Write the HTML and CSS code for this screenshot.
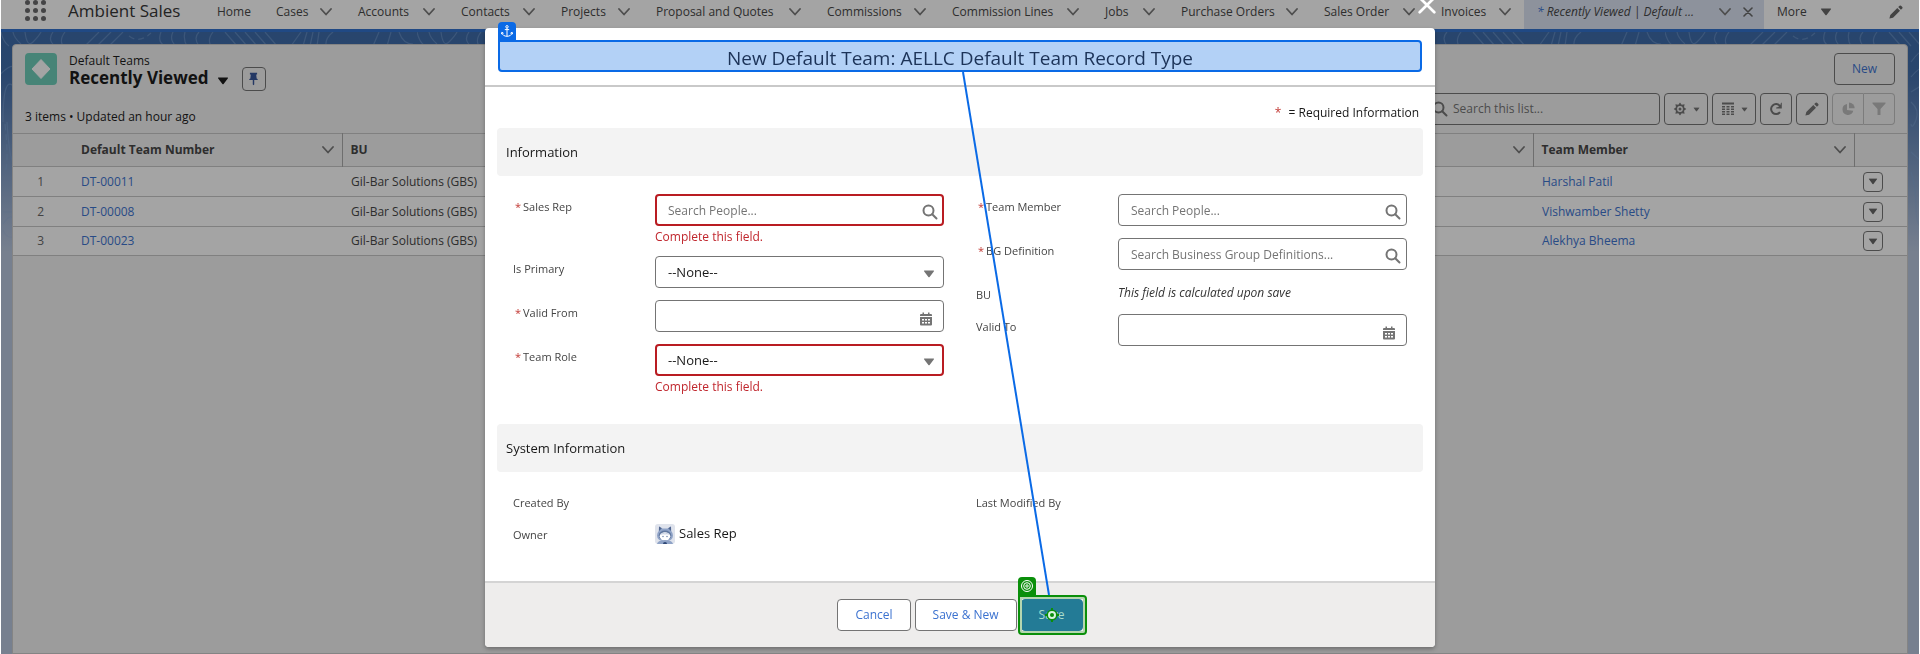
FILE: index.html
```html
<!DOCTYPE html>
<html lang="en">
<head>
<meta charset="utf-8">
<title>Ambient Sales</title>
<link rel="stylesheet" href="styles.css">
</head>
<body>
<svg class="symbols" aria-hidden="true">
  <symbol id="chevron" viewBox="0 0 12 8"><path d="M1 1l5 5.500 5-5.500" fill="none" stroke="currentColor" stroke-width="1.800" stroke-linecap="round" stroke-linejoin="round"/></symbol>
  <symbol id="down" viewBox="0 0 12 8"><path d="M1.500.5h9q1 0 .3.900L6.600 6.900q-.6.700-1.200 0L1.200 1.400Q.5.500 1.500.5z" fill="currentColor"/></symbol>
  <symbol id="search" viewBox="0 0 16 16"><circle cx="6.500" cy="6.500" r="5" fill="none" stroke="currentColor" stroke-width="2"/><path d="M10.200 10.200l4.300 4.300" stroke="currentColor" stroke-width="2" stroke-linecap="round"/></symbol>
  <symbol id="calendar" viewBox="0 0 12 14"><path d="M2.500.5h1.500V2h4V.5h1.500V2H11q1 0 1 1v1H0V3q0-1 1-1h1.500zM0 5h12v7.500q0 1-1 1H1q-1 0-1-1z" fill="currentColor"/><path d="M2 7h2v1.500H2zM5 7h2v1.500H5zM8 7h2v1.500H8zM2 10h2v1.500H2zM5 10h2v1.500H5zM8 10h2v1.500H8z" fill="#fff"/></symbol>
  <symbol id="pencil" viewBox="0 0 14 14"><path d="M.4 13.600L1.300 10 8.300 3l2.700 2.700-7 7zM9.200 2.100l1.400-1.400q.7-.6 1.400 0l1.300 1.300q.6.700 0 1.400l-1.400 1.400z" fill="currentColor"/></symbol>
</svg>

<header class="nav">
  <svg class="launcher" viewBox="0 0 21 22" aria-hidden="true"><g fill="#68686a"><circle cx="2.500" cy="2.500" r="2.500"/><circle cx="10.500" cy="2.500" r="2.500"/><circle cx="18.500" cy="2.500" r="2.500"/><circle cx="2.500" cy="10.500" r="2.500"/><circle cx="10.500" cy="10.500" r="2.500"/><circle cx="18.500" cy="10.500" r="2.500"/><circle cx="2.500" cy="18.500" r="2.500"/><circle cx="10.500" cy="18.500" r="2.500"/><circle cx="18.500" cy="18.500" r="2.500"/></g></svg>
  <span class="app-name">Ambient Sales</span>
  <nav class="tabs">
    <a class="tab" href="#">Home</a>
    <a class="tab" href="#">Cases<svg class="chev"><use href="#chevron"/></svg></a>
    <a class="tab" href="#">Accounts<svg class="chev"><use href="#chevron"/></svg></a>
    <a class="tab" href="#">Contacts<svg class="chev"><use href="#chevron"/></svg></a>
    <a class="tab" href="#">Projects<svg class="chev"><use href="#chevron"/></svg></a>
    <a class="tab" href="#">Proposal and Quotes<svg class="chev"><use href="#chevron"/></svg></a>
    <a class="tab" href="#">Commissions<svg class="chev"><use href="#chevron"/></svg></a>
    <a class="tab" href="#">Commission Lines<svg class="chev"><use href="#chevron"/></svg></a>
    <a class="tab" href="#">Jobs<svg class="chev"><use href="#chevron"/></svg></a>
    <a class="tab" href="#">Purchase Orders<svg class="chev"><use href="#chevron"/></svg></a>
    <a class="tab" href="#">Sales Order<svg class="chev"><use href="#chevron"/></svg></a>
    <a class="tab tab-invoices" href="#">Invoices<svg class="chev"><use href="#chevron"/></svg></a>
    <a class="tab tab-active" href="#"><span><b class="unsaved">*</b> Recently Viewed | Default ...</span><svg class="chev"><use href="#chevron"/></svg><svg class="tab-close" viewBox="0 0 10 10"><path d="M1 1l8 8M9 1L1 9" stroke="currentColor" stroke-width="1.600" stroke-linecap="round"/></svg></a>
    <a class="tab tab-more" href="#">More<svg class="tri"><use href="#down"/></svg></a>
  </nav>
  <svg class="edit-nav"><use href="#pencil"/></svg>
</header>

<main class="page">
  <svg class="contours" aria-hidden="true">
    <defs>
      <pattern id="topo" width="416" height="230" patternUnits="userSpaceOnUse">
        <g fill="none" stroke="#7fa6d8" stroke-width="1.200" opacity=".45">
          <path d="M0 0q2 10 8 14M12 0q1 6 8 12M24 0q2 16 8 10t8-10M52 0q-6 8 2 14M64 0q-6 8-2 14M98 0L84 14M110 0L96 14M122 0l-14 14"/>
          <path d="M128 4q10 8 22-3" stroke-dasharray="6 4"/>
          <path d="M160 0q-4 10 4 14M172 0q-4 8 3 14M184 0q-2 8 2 14M198 0q-6 6 0 14M212 0q-6 8-2 14M224 0l12 14M234 0l12 14M244 0l12 14M254 0l12 14M264 0l12 14M300 0l-10 14M306 0l-4 14M312 0l-3 14M318 0l-2 14M332 0q-8 6-7 14M378 0l-6 14M390 0l-4 14M398 0q4 12 14 12"/>
          <path d="M-4 46Q10 30 14 36M2 90q0-50 12-34M6 90q2 34 7 44M2 180h14M2 192q8-12 12-4v16q-8 4-12-6"/>
          <path d="M4 92q4 36 0 50" stroke-dasharray="6 4"/>
          <path d="M246 30q10-14 16-12M246 45q8-10 16-11M246 60l16-10M246 70q9 8 5 18t-5 4M246 120q12 12 16 10M246 140q5 14 5 36t10 20"/>
        </g>
      </pattern>
      <linearGradient id="fade" x2="0" y2="1"><stop offset=".6" stop-color="#fff"/><stop offset="1" stop-color="#000"/></linearGradient>
      <mask id="fadeMask"><rect width="100%" height="230" fill="url(#fade)"/></mask>
    </defs>
    <rect width="100%" height="230" fill="url(#topo)" mask="url(#fadeMask)"/>
  </svg>
  <section class="card">
    <div class="card-top">
      <svg class="object-icon" viewBox="0 0 32 32" aria-hidden="true"><rect width="32" height="32" rx="4" fill="#6dcdb8"/><path d="M16 6.500l9 9.500-9 9.500L7 16z" fill="#fff" stroke="#fff" stroke-linejoin="round"/></svg>
      <div class="heading">
        <span class="object-name">Default Teams</span>
        <h1 class="view-name">Recently Viewed</h1>
      </div>
      <svg class="view-tri"><use href="#down"/></svg>
      <button class="btn pin" aria-label="Pin this list view"><svg viewBox="0 0 10 14"><path d="M1 0h8v2H8l.5 4.500q1.300.5 1.300 1.700H5.800V13L5 14l-.8-1V8.200H.2q0-1.200 1.300-1.700L2 2H1z" fill="currentColor"/></svg></button>
      <button class="btn new">New</button>
    </div>
    <div class="tools">
      <p class="count">3 items • Updated an hour ago</p>
      <label class="list-search"><svg><use href="#search"/></svg><input type="search" placeholder="Search this list..." aria-label="Search this list"></label>
      <button class="btn tool wide" aria-label="List view controls"><svg class="gear" viewBox="0 0 14 14"><path d="M7 .5l1.700 2.300 2.900-.5-.6 2.900L13.300 7 11 8.800l.6 2.900-2.900-.5L7 13.500l-1.700-2.300-2.900.5.6-2.900L.7 7 3 5.200l-.6-2.900 2.900.5z" fill="currentColor"/><circle cx="7" cy="7" r="2.900" fill="#f3f3f3"/><circle cx="7" cy="7" r="1.500" fill="currentColor"/></svg><svg class="small-tri" viewBox="0 0 12 8"><use href="#down"/></svg></button>
      <button class="btn tool wide" aria-label="Display as"><svg class="grid-icon" viewBox="0 0 12 14"><path d="M0 .5h12v2H0zM0 4h3v1.500H0zM4.500 4h3v1.500h-3zM9 4h3v1.500H9zM0 6.500h3V8H0zM4.500 6.500h3V8h-3zM9 6.500h3V8H9zM0 9h3v1.500H0zM4.500 9h3v1.500h-3zM9 9h3v1.500H9zM0 11.500h3V13H0zM4.500 11.500h3V13h-3zM9 11.500h3V13H9z" fill="currentColor"/></svg><svg class="small-tri" viewBox="0 0 12 8"><use href="#down"/></svg></button>
      <button class="btn tool" aria-label="Refresh"><svg class="refresh" viewBox="0 0 14 14"><path d="M11 10.200A5 5 0 1 1 11 4" fill="none" stroke="currentColor" stroke-width="2"/><path d="M12.800.8v5.600H7.200v-.8l2-.6 2.200-2.200.6-2z" fill="currentColor"/></svg></button>
      <button class="btn tool" aria-label="Edit"><svg class="edit"><use href="#pencil"/></svg></button>
      <div class="pair">
        <button class="btn tool" disabled aria-label="Charts"><svg class="pie" viewBox="0 0 14 14"><path d="M6 2a5.500 5.500 0 1 0 6.300 6.800L6 8z" fill="currentColor"/><path d="M8 .5V6.300h5.700A6 6 0 0 0 8 .5z" fill="currentColor"/></svg></button>
        <button class="btn tool" disabled aria-label="Filters"><svg class="funnel" viewBox="0 0 14 14"><path d="M.5.500h13v1L8.500 7v6h-3V7L.5 1.500z" fill="currentColor"/></svg></button>
      </div>
    </div>
    <table class="list">
      <thead><tr>
        <th class="col-num"></th>
        <th class="col-name"><span class="th">Default Team Number<svg class="chev"><use href="#chevron"/></svg></span></th>
        <th class="col-bu"><span class="th">BU<svg class="chev"><use href="#chevron"/></svg></span></th>
        <th class="col-member"><span class="th">Team Member<svg class="chev"><use href="#chevron"/></svg></span></th>
        <th class="col-act"></th>
      </tr></thead>
      <tbody>
        <tr><td class="num">1</td><td><a href="#">DT-00011</a></td><td>Gil-Bar Solutions (GBS)</td><td><a href="#">Harshal Patil</a></td><td class="act"><button class="btn row-menu" aria-label="Row actions"><svg viewBox="0 0 12 8"><use href="#down"/></svg></button></td></tr>
        <tr><td class="num">2</td><td><a href="#">DT-00008</a></td><td>Gil-Bar Solutions (GBS)</td><td><a href="#">Vishwamber Shetty</a></td><td class="act"><button class="btn row-menu" aria-label="Row actions"><svg viewBox="0 0 12 8"><use href="#down"/></svg></button></td></tr>
        <tr><td class="num">3</td><td><a href="#">DT-00023</a></td><td>Gil-Bar Solutions (GBS)</td><td><a href="#">Alekhya Bheema</a></td><td class="act"><button class="btn row-menu" aria-label="Row actions"><svg viewBox="0 0 12 8"><use href="#down"/></svg></button></td></tr>
      </tbody>
    </table>
  </section>
</main>

<div class="backdrop"></div>

<form class="modal" role="dialog" aria-labelledby="modal-title">
  <button class="close" type="button" aria-label="Close"><svg viewBox="0 0 16 16"><path d="M1.500 1.500l13 13M14.500 1.500l-13 13" stroke="#fff" stroke-width="2.400" stroke-linecap="round"/></svg></button>
  <div class="modal-head">
    <div class="title-box">
      <span class="anchor-tag"><svg viewBox="0 0 12 12" fill="none" stroke="#fff"><circle cx="6" cy="1.800" r="1.200"/><path d="M6 3v8.300M3.800 4.600h4.400M.8 7.600C1.200 10 3.400 11.300 6 11.300S10.800 10 11.200 7.600M.4 9.200l.5-1.900 1.700 1M11.600 9.200l-.5-1.900-1.700 1"/></svg></span>
      <h2 id="modal-title">New Default Team: AELLC Default Team Record Type</h2>
    </div>
  </div>
  <div class="modal-body">
    <p class="required-note"><span class="req">*</span> = Required Information</p>
    <h3 class="section-title">Information</h3>
    <div class="section">
      <div class="column">
        <div class="field"><label for="rep"><span class="req">*</span>Sales Rep</label><div class="control invalid"><input id="rep" type="text" placeholder="Search People..."><svg class="i-search"><use href="#search"/></svg><p class="error">Complete this field.</p></div></div>
        <div class="field"><label for="primary">Is Primary</label><div class="control"><select id="primary"><option>--None--</option></select><svg class="i-down"><use href="#down"/></svg></div></div>
        <div class="field"><label for="from"><span class="req">*</span>Valid From</label><div class="control"><input id="from" type="text"><svg class="i-cal"><use href="#calendar"/></svg></div></div>
        <div class="field"><label for="role"><span class="req">*</span>Team Role</label><div class="control invalid"><select id="role"><option>--None--</option></select><svg class="i-down"><use href="#down"/></svg><p class="error">Complete this field.</p></div></div>
      </div>
      <div class="column">
        <div class="field"><label for="member"><span class="req">*</span>Team Member</label><div class="control"><input id="member" type="text" placeholder="Search People..."><svg class="i-search"><use href="#search"/></svg></div></div>
        <div class="field"><label for="bg"><span class="req">*</span>BG Definition</label><div class="control"><input id="bg" type="text" placeholder="Search Business Group Definitions..."><svg class="i-search"><use href="#search"/></svg></div></div>
        <div class="field"><span class="label">BU</span><em class="calculated">This field is calculated upon save</em></div>
        <div class="field"><label for="to">Valid To</label><div class="control"><input id="to" type="text"><svg class="i-cal"><use href="#calendar"/></svg></div></div>
      </div>
    </div>
    <h3 class="section-title">System Information</h3>
    <div class="section section-last">
      <div class="column">
        <div class="field"><span class="label">Created By</span></div>
        <div class="field"><span class="label">Owner</span><div class="owner"><svg viewBox="0 0 20 20" aria-hidden="true"><rect width="20" height="20" rx="3" fill="#dfe3ec"/><path d="M4 2.500l3.500 2h5l3.500-2 .3 4.500Q18 9 18 11.500 18 17 10 17T2 11.500Q2 9 3.700 7z" fill="#8fa3c7"/><path d="M4 2.500l2.800 1.800L4 7zM16 2.500l-2.800 1.800L16 7z" fill="#4f658f"/><ellipse cx="10" cy="11.500" rx="6.300" ry="5" fill="#60779f"/><ellipse cx="10" cy="12.300" rx="5.300" ry="4" fill="#fff"/><path d="M5 11q2-3 5-1.500Q13 8 15 11q-2.500-1-5-.5-2.500-.5-5 .5z" fill="#c4cee0"/><circle cx="8" cy="12.500" r=".7" fill="#60779f"/><circle cx="12" cy="12.500" r=".7" fill="#60779f"/><path d="M2 20q1-3.500 5-3.500h6q4 0 5 3.500z" fill="#8fa3c7"/><path d="M8 20q0-2 2-2t2 2z" fill="#2f4775"/></svg>Sales Rep</div></div>
      </div>
      <div class="column">
        <div class="field"><span class="label">Last Modified By</span></div>
      </div>
    </div>
  </div>
  <div class="modal-foot">
    <button class="btn" type="button">Cancel</button>
    <button class="btn" type="button">Save &amp; New</button>
    <div class="save-wrap">
      <button class="btn save" type="button">Save</button>
      <span class="target-frame">
        <span class="target-tag"><svg viewBox="0 0 12 12" fill="none" stroke="#fff"><circle cx="6" cy="6" r="5.500"/><circle cx="6" cy="6" r="3.300"/><circle cx="6" cy="6" r="1.200"/></svg></span>
        <svg class="crosshair" viewBox="0 0 14 14"><path d="M7 0v14M0 7h14" stroke="#0a8f0a" stroke-width="2"/><circle cx="7" cy="7" r="5.500" fill="#0a8f0a"/><circle cx="7" cy="7" r="3" fill="#0a8f0a" stroke="#d9f2e0" stroke-width="2"/></svg>
      </span>
    </div>
  </div>
  <svg class="connector" viewBox="0 0 90 523" aria-hidden="true"><path d="M3 0L89 523" stroke="#0a6ae6" stroke-width="2"/></svg>
</form>
</body>
</html>
```
FILE: styles.css
```css
* { box-sizing: border-box; }
body {
  margin: 0 1px;
  min-height: 100vh;
  display: flex;
  flex-direction: column;
  background: #fff;
  color: #181818;
  font: 12px/18px "Open Sans", "Noto Sans", sans-serif;
  overflow: hidden;
}
h1, h2, h3, p { margin: 0; font-weight: 400; }
a { color: #3b72d0; text-decoration: none; }
button, input, select { font: inherit; }
svg { flex: none; }
.symbols { position: absolute; width: 0; height: 0; }
.chev { width: 12px; height: 8px; color: #777; }
.tri { width: 12px; height: 8px; color: #666; }

/* Global navigation */
.nav {
  display: flex;
  align-items: flex-start;
  height: 32px;
  padding-left: 24px;
  border-bottom: 3px solid #2f70cc;
  background: #fff;
}
.launcher { width: 21px; height: 22px; }
.app-name { width: 149px; padding-left: 22px; font-size: 17px; line-height: 22px; color: #333; white-space: nowrap; }
.tabs {
  display: grid;
  flex: 1;
  grid-template-columns: 59px 82px 103px 100px 95px 171px 125px 153px 76px 143px 117px 83px 240px 1fr;
  margin-left: 22px;
  height: 29px;
}
.tab {
  display: flex;
  align-items: center;
  justify-content: space-between;
  padding: 0 26px 6px 0;
  color: #444;
  white-space: nowrap;
}
.tab-invoices { padding-right: 13px; }
.tab-active { padding: 0 11px 6px 13px; background: #dbe3f2; font-style: italic; }
.tab-active span { flex: 1; }
.tab-active .chev { margin-right: 12px; }
.tab-close { width: 10px; height: 10px; color: #666; }
.unsaved { color: #3b72d0; font-weight: 400; }
.tab-more { justify-content: flex-start; gap: 13px; padding-left: 13px; }
.edit-nav { width: 14px; height: 14px; margin: 5px 16px 0 0; color: #666; }

/* Page canvas */
.page {
  position: relative;
  flex: 1;
  display: flex;
  padding: 12px 11px 0;
  background: linear-gradient(#3b69a8, #3d6aa8 40px, #b8c6de 220px);
}
.contours { position: absolute; inset: 0; width: 100%; height: 230px; }
.card {
  position: relative;
  flex: 1;
  border: 1px solid #ccc;
  border-radius: 4px 4px 0 0;
  background: #f3f3f3;
}
.card-top { display: flex; align-items: flex-start; padding: 8px 12px 0; }
.object-icon { width: 32px; height: 32px; }
.heading { margin-left: 12px; }
.object-name { display: block; line-height: 15px; }
.view-name { font-size: 17px; line-height: 20px; font-weight: 700; }
.view-tri { width: 12px; height: 8px; margin: 24px 13px 0 8px; }
.btn {
  display: inline-flex;
  align-items: center;
  justify-content: center;
  height: 32px;
  padding: 0 17px;
  border: 1px solid #747474;
  border-radius: 4px;
  background: #fff;
  color: #3b72d0;
  white-space: nowrap;
}
.card .btn { background: transparent; }
.card .pin { width: 24px; height: 24px; padding: 0; margin-top: 14px; }
.pin svg { width: 9px; height: 14px; color: #35549a; }
.new { margin-left: auto; }
.tools { display: flex; gap: 4px; align-items: center; padding: 1px 12px 7px; }
.count { flex: 1; padding-top: 16px; }
.list-search { display: flex; align-items: center; gap: 5px; width: 240px; height: 32px; padding: 0 11px; border: 1px solid #747474; border-radius: 4px; }
.list-search svg { width: 16px; height: 16px; color: #747474; }
.list-search input { flex: 1; min-width: 0; padding: 0; border: 0; outline: 0; background: none; }
input::placeholder { color: #747474; opacity: 1; }
.tool { width: 32px; padding: 0; color: #747474; }
.card .tool { padding: 0; }
.card .wide { width: 44px; gap: 6px; }
.tool svg { width: 14px; height: 14px; }
.tool .small-tri { width: 7px; height: 5px; }
.pair { display: flex; }
.pair .btn { color: #bbb; border-color: #c0c0c0; }
.pair .btn:first-child { border-radius: 4px 0 0 4px; }
.pair .btn:last-child { width: 31px; border-left: 0; border-radius: 0 4px 4px 0; }

/* Record list */
.list { width: 100%; table-layout: fixed; border-collapse: collapse; border-top: 1px solid #c6c6c6; }
.list th { height: 33px; padding: 0 8px; border-left: 1px solid #aaa; text-align: left; font-weight: 700; color: #444; }
.list .col-num, .list .col-name { border-left: 0; }
.th { display: flex; align-items: center; justify-content: space-between; }
.col-num { width: 60px; }
.col-name { width: 269px; }
.col-member { width: 321px; }
.col-act { width: 53px; }
.list td { height: 30px; padding: 0 9px; border-top: 1px solid #c6c6c6; color: #444; background: #fff; }
.list td:nth-child(2) { padding-left: 8px; }
.list tbody tr:last-child td { height: 29px; border-bottom: 1px solid #c6c6c6; }
.list .num { padding: 0 29px 0 0; text-align: right; color: #666; }
.list .row-menu { width: 20px; height: 20px; padding: 0; vertical-align: middle; color: #666; }
.row-menu svg { width: 10px; height: 7px; }

.backdrop { position: fixed; inset: 0 1px; background: rgba(8, 7, 7, .37); }

/* Record dialog */
.modal {
  position: absolute;
  top: 28px;
  left: 50%;
  width: calc(50% - 10px);
  transform: translateX(-50%);
  border-radius: 4px;
  background: #fff;
  box-shadow: 0 2px 4px rgba(0, 0, 0, .3);
}
.close { position: absolute; top: -32px; right: -1px; width: 18px; height: 18px; padding: 0; border: 0; background: none; }
.close svg { display: block; width: 18px; height: 18px; }
.modal-head { padding: 12px 13px 13px; border-bottom: 2px solid #c9c9c9; }
.title-box { position: relative; height: 32px; border: 2px solid #0a6ae6; border-radius: 0 4px 4px 4px; background: #b3d1f6; text-align: center; }
.title-box h2 { font-size: 19px; line-height: 32px; color: #1c3358; white-space: nowrap; }
.anchor-tag, .target-tag {
  position: absolute;
  left: -2px;
  top: -20px;
  display: grid;
  place-items: center;
  width: 18px;
  height: 18px;
  border-radius: 4px 4px 0 0;
  background: #0a6ae6;
}
.anchor-tag svg, .target-tag svg { width: 12px; height: 12px; }
.modal-body { padding: 0 12px; }
.required-note { padding: 17px 4px 6px; text-align: right; }
.req { margin-right: 4px; color: #c23934; }
.section-title { padding: 0 9px; border-radius: 4px; background: #f3f3f3; font-size: 13px; line-height: 48px; }
.section { display: grid; grid-template-columns: 1fr 1fr; padding: 18px 0 30px; }
.section-last { padding-bottom: 37px; }
.column { display: flex; flex-direction: column; gap: 12px; padding: 0 16px; }
.field { display: grid; grid-template-columns: 142px 1fr; align-items: start; }
.field label, .label { padding-top: 6px; font-size: 11px; line-height: 14px; color: #444; }
label .req { margin: 0 2px; }
.control { position: relative; }
.control input, .control select {
  display: block;
  width: 100%;
  height: 32px;
  padding: 0 12px;
  border: 1px solid #747474;
  border-radius: 4px;
  background: #fff;
  color: #181818;
  appearance: none;
}
.control select { font-size: 13px; }
.control.invalid input, .control.invalid select { padding: 0 11px; border: 2px solid #b91c22; }
.control svg { position: absolute; color: #747474; }
.i-search { top: 10px; right: 6px; width: 16px; height: 16px; }
.i-down { top: 14px; right: 9px; width: 12px; height: 8px; }
.i-cal { top: 12px; right: 12px; width: 12px; height: 14px; }
.error { padding-top: 3px; font-size: 12px; line-height: 15px; color: #c0262d; }
.calculated { padding-top: 2px; font-size: 12px; line-height: 18px; color: #333; }
.owner { display: flex; gap: 4px; padding-top: 2px; font-size: 13px; line-height: 18px; }
.owner svg { width: 20px; height: 20px; }
.modal-foot { display: flex; justify-content: center; gap: 4px; padding: 16px; border-top: 2px solid #d4d4d4; border-radius: 0 0 4px 4px; background: #eeedec; }
.save-wrap { position: relative; }
.save { border-color: #237b96; background: #237b96; color: #a9dccb; }
.target-frame { position: absolute; inset: -4px -4px -4px -3px; border: 2px solid #0a8f0a; border-radius: 0 4px 4px 4px; box-shadow: inset 0 0 0 2px #b5d6b0; }
.target-tag { background: #0a8f0a; }
.crosshair { position: absolute; top: 50%; left: 50%; width: 14px; height: 14px; margin: -7px; }
.connector { position: absolute; top: 44px; left: 50%; width: 90px; height: 523px; }
```
